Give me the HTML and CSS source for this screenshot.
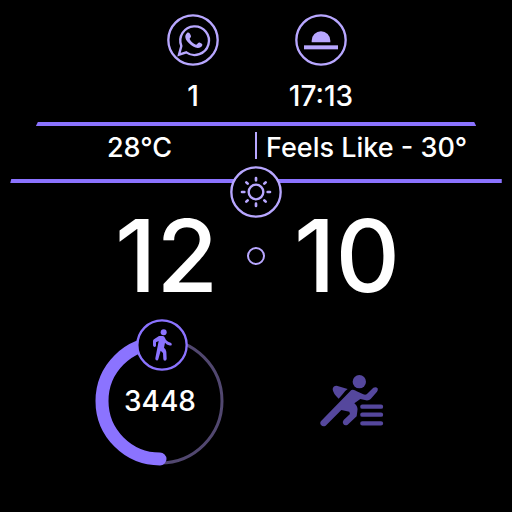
FILE: index.html
```html
<!DOCTYPE html>
<html lang="en">
<head>
<meta charset="utf-8">
<meta name="viewport" content="width=device-width, initial-scale=1">
<title>Watch face</title>
<link rel="stylesheet" href="styles.css">
</head>
<body>
<main class="face">
  <section class="stats">
    <div class="stat">
      <svg class="badge" viewBox="0 0 156 156" role="img" aria-label="Messages">
        <circle class="outline" cx="78" cy="78" r="74"/>
        <path class="stroke" d="M36 122 L43 96 A43 43 0 1 1 58 115 Z"/>
        <path class="fill" d="M60 57 C65 53 70 60 72 66 C73 70 67 73 68 75 C72 84 79 89 87 92 C91 93 93 84 99 86 C109 90 107 94 102 99 C92 107 76 99 66 88 C56 78 50 66 60 57 Z"/>
      </svg>
      <span class="value">1</span>
    </div>
    <div class="stat">
      <svg class="badge" viewBox="0 0 156 156" role="img" aria-label="Sunset">
        <circle class="outline" cx="78" cy="78" r="74"/>
        <path class="fill" d="M50 85 V80 A28 28 0 0 1 106 80 V85 Z"/>
        <rect class="fill" x="27" y="94" width="102" height="12"/>
      </svg>
      <span class="value">17:13</span>
    </div>
  </section>
  <div class="rule rule-short"></div>
  <section class="weather">
    <span class="temp">28°C</span>
    <span class="divider"></span>
    <span class="feels">Feels Like - 30°</span>
  </section>
  <div class="rule rule-long"></div>
  <svg class="badge sun" viewBox="0 0 156 156" role="img" aria-label="Sunny">
    <circle class="disc" cx="78" cy="78" r="74"/>
    <circle class="stroke" cx="78" cy="78" r="22"/>
    <path class="ray" d="M78 36v7M78 113v7M36 78h7M113 78h7M49 49l4 4M103 103l4 4M107 49l-4 4M53 103l-4 4"/>
  </svg>
  <section class="time">
    <span class="hours">12</span>
    <span class="dot"></span>
    <span class="minutes">10</span>
  </section>
  <section class="activity">
    <div class="steps">
      <svg class="ring" viewBox="0 0 130 130" aria-hidden="true">
        <circle class="track" cx="65" cy="65" r="62"/>
        <path class="progress" d="M65 7 A58 58 0 0 0 65 123"/>
      </svg>
      <span class="value count">3448</span>
      <svg class="walk" viewBox="0 0 156 156" role="img" aria-label="Steps">
        <circle class="disc" cx="78" cy="78" r="74"/>
        <circle class="fill" cx="83" cy="40" r="9"/>
        <path class="fill" d="M69 51 H80 Q85 51 87 57 Q91 68 104 71 Q109 73 107 78 Q105 81 99 79 Q92 77 87 71 L84 86 Q90 91 91 98 L92 120 Q91 125 87 125 Q82 125 82 120 L81 102 L74 95 L67 121 Q65 126 61 124 Q57 123 58 118 L68 66 L60 70 V80 Q59 84 55 84 Q51 83 51 79 V66 Q51 63 54 61 Z"/>
      </svg>
    </div>
    <svg class="runner" viewBox="0 0 255 210" role="img" aria-label="Workout">
      <circle cx="148" cy="47" r="20"/>
      <path d="M68 70 Q68 60 80 59 L113 69 Q104 75 99 83 L86 98 Q69 83 68 70 Z"/>
      <path d="M124 72 Q132 69 140 76 L160 85 Q169 88 174 81 L190 65 Q198 61 203 67 Q205 73 201 77 L182 99 Q177 104 168 103 L151 99 L133 112 Q145 121 142 136 L140 151 L113 176 Q105 181 100 174 Q96 168 101 162 L120 144 L118 137 L94 132 L47 179 Q39 184 33 177 Q28 170 34 164 Z"/>
      <path class="bars" d="M157 122h56M157 146h56M157 172h56"/>
    </svg>
  </section>
</main>
</body>
</html>
```

FILE: styles.css
```css
* {
  box-sizing: border-box;
}

body {
  margin: 0;
  background: #000;
  color: #fff;
  font: 500 28px/32px Inter, "Liberation Sans", sans-serif;
}

svg {
  display: block;
}

.face {
  display: flex;
  flex-direction: column;
  align-items: center;
  padding-top: 14px;
}

.stats {
  display: flex;
  padding-left: 2px;
}

.stat {
  width: 128px;
  display: flex;
  flex-direction: column;
  align-items: center;
  gap: 14px;
}

.badge {
  width: 52px;
  height: 52px;
}

.outline,
.disc,
.stroke,
.ray {
  fill: none;
  stroke: #b8a7ff;
  stroke-width: 7;
}

.disc {
  fill: #000;
}

.ray {
  stroke-width: 8;
  stroke-linecap: round;
}

.fill {
  fill: #b8a7ff;
}

.rule {
  height: 4px;
  background: #8b73ff;
}

.rule-short {
  width: 86%;
  margin-top: 10px;
  clip-path: polygon(2px 0, calc(100% - 2px) 0, 100% 100%, 0 100%);
}

.rule-long {
  width: 96%;
  clip-path: polygon(1px 0, 100% 0, 100% 100%, 0 100%);
}

.weather {
  width: 100%;
  height: 53px;
  padding-top: 6px;
  display: grid;
  grid-template-columns: 1fr 2px 1fr;
  align-items: start;
  font-size: 27px;
}

.temp {
  padding-left: 24px;
  text-align: center;
}

.divider {
  height: 27px;
  background: #b8a7ff;
}

.feels {
  padding-left: 9px;
  white-space: nowrap;
}

.sun {
  position: relative;
  margin-top: -17px;
}

.time {
  width: 100%;
  display: grid;
  grid-template-columns: 1fr 18px 1fr;
  align-items: center;
  font-size: 100px;
  line-height: 76px;
}

.hours {
  padding-right: 29px;
  text-align: right;
}

.minutes {
  padding-left: 29px;
}

.dot {
  height: 18px;
  border: 2px solid #b8a7ff;
  border-radius: 50%;
}

.activity {
  margin-top: 42px;
  padding-right: 22px;
  display: flex;
  gap: 85px;
  align-items: center;
}

.steps {
  position: relative;
  display: grid;
  place-items: center;
}

.ring {
  width: 130px;
  height: 130px;
  grid-area: 1 / 1;
}

.count {
  grid-area: 1 / 1;
}

.track,
.progress {
  fill: none;
  stroke: #51476f;
  stroke-width: 3;
}

.progress {
  stroke: #8b73ff;
  stroke-width: 13;
  stroke-linecap: round;
}

.walk {
  position: absolute;
  top: -17px;
  left: 41px;
  width: 52px;
  height: 52px;
}

.walk .disc {
  stroke: #8b73ff;
}

.walk .fill {
  fill: #8b73ff;
}

.runner {
  width: 85px;
  height: 70px;
  fill: #55479d;
}

.bars {
  stroke: #55479d;
  stroke-width: 13;
  stroke-linecap: round;
}
```
